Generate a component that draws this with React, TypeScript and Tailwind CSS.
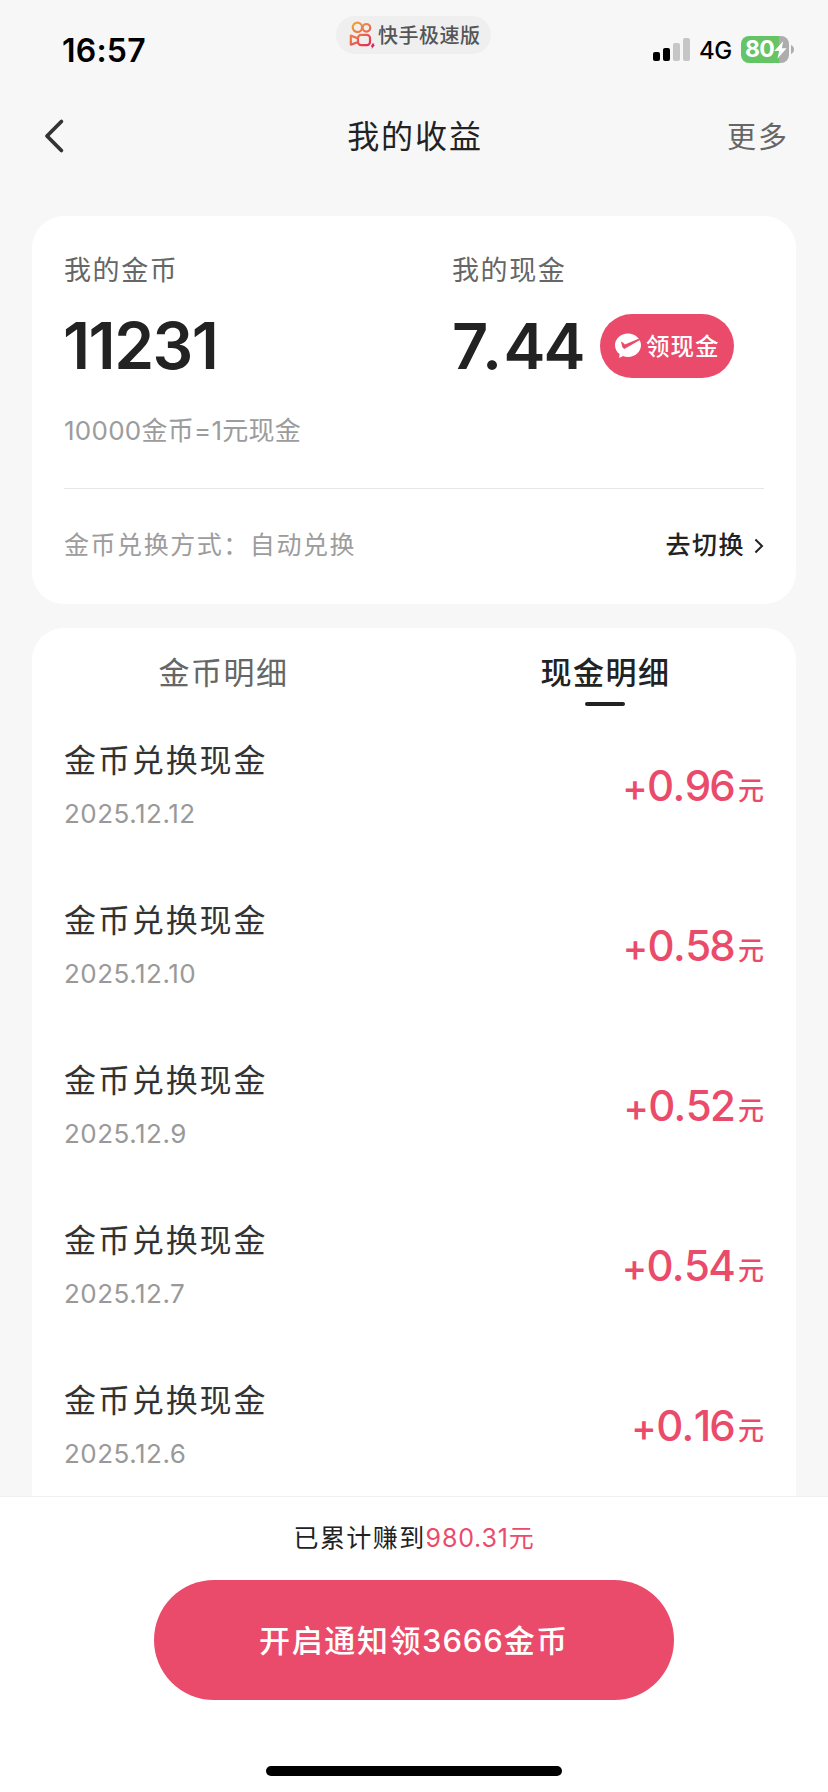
const records = [
  { date: "2025.12.12", whole: "0", cents: "96" },
  { date: "2025.12.10", whole: "0", cents: "58" },
  { date: "2025.12.9", whole: "0", cents: "52" },
  { date: "2025.12.7", whole: "0", cents: "54" },
  { date: "2025.12.6", whole: "0", cents: "16" },
];

function KwaiLogo() {
  return (
    <svg className="h-[28px] w-[26px] shrink-0" viewBox="0 0 26 28" fill="none">
      <defs>
        <linearGradient id="kwai" x1="3" y1="2" x2="20" y2="27" gradientUnits="userSpaceOnUse">
          <stop offset="0" stopColor="#f5a52c" />
          <stop offset="0.5" stopColor="#ee6a4c" />
          <stop offset="1" stopColor="#e0245e" />
        </linearGradient>
      </defs>
      <g stroke="url(#kwai)" strokeWidth="2.2">
        <circle cx="8.4" cy="6.3" r="4.7" />
        <circle cx="17.4" cy="6.8" r="3.8" />
        <rect x="9" y="13.8" width="12" height="10.4" rx="3.2" />
        <path d="M8.6 17.2 1.8 14.6v9l6.8-2.4" strokeLinejoin="round" />
      </g>
      <path d="M23.3 22.4h2l-.5 1.7h1.200L22.600 28l.4-2.300h-1.300z" fill="#e0245e" />
    </svg>
  );
}

function StatusBar() {
  return (
    <div className="flex h-[88px] shrink-0 items-start">
      <div className="w-[336px] pt-[31px] pl-[62px] text-[32px] leading-[40px] font-semibold tracking-[0.2px] text-black">16:57</div>
      <div className="mt-4 flex h-[38px] w-[155px] items-center rounded-full bg-[#efefef] pl-[13px]">
        <KwaiLogo />
        <span className="mt-[1px] ml-[3px] text-[20px] leading-[28px] font-medium tracking-[0.5px] whitespace-nowrap text-[#555]">快手极速版</span>
      </div>
      <div className="ml-auto flex pt-[35px] pr-[34px]">
        <svg className="mt-[3px] h-[23px] w-[37px]" viewBox="0 0 37 23">
          <rect x="0" y="14" width="7" height="9" rx="2" fill="#000" />
          <rect x="10" y="10" width="7" height="13" rx="2" fill="#000" />
          <rect x="20" y="5" width="7" height="18" rx="2" fill="#c6c6c6" />
          <rect x="30" y="0" width="7" height="23" rx="2" fill="#c6c6c6" />
        </svg>
        <span className="ml-[9px] w-[32px] text-[24px] leading-[31px] font-medium tracking-[-0.5px] text-black">4G</span>
        <div className="mt-[1px] ml-[10px] flex h-[27px] w-[48px] items-center overflow-hidden rounded-[8px] bg-linear-to-r from-[#65c466] from-80% to-[#adadad] to-80%">
          <span className="ml-[4px] w-[28px] text-[23px] leading-[27px] font-bold tracking-[-0.8px] text-white">80</span>
          <svg className="ml-[1px] h-[18px] w-[13px]" viewBox="0 0 13 18">
            <path d="M9.200.3.200 10h5L3.400 17.700 12.600 7.300H7.800z" fill="#fff" />
          </svg>
        </div>
        <svg className="mt-[10px] ml-[2px] h-[9px] w-[3px]" viewBox="0 0 3 9">
          <path d="M0 0c1.800.6 3 2.300 3 4.500S1.800 8.400 0 9z" fill="#adadad" />
        </svg>
      </div>
    </div>
  );
}

function NavBar() {
  return (
    <header className="flex h-[96px] shrink-0 items-center justify-between pr-[39px] pl-[43px]">
      <svg className="h-[36px] w-[60px]" viewBox="0 0 60 36" fill="none">
        <path d="M18.4 3.5 4 18 18.4 32.5" stroke="#333" strokeWidth="3.8" strokeLinecap="round" strokeLinejoin="round" />
      </svg>
      <h1 className="mt-[2px] text-[32px] leading-[44px] tracking-[1.9px] text-[#222]">我的收益</h1>
      <span className="mt-[3px] text-[29px] leading-[40px] tracking-[2px] text-[#666]">更多</span>
    </header>
  );
}

function BalanceCard() {
  return (
    <section className="mt-8 flex h-[388px] shrink-0 flex-col rounded-[32px] bg-white px-8">
      <div className="grid grid-cols-[388px_1fr]">
        <div>
          <p className="mt-[35px] text-[27px] leading-[40px] tracking-[1.6px] text-[#666]">我的金币</p>
          <p className="mt-[15px] -ml-[1px] text-[64px] leading-[80px] font-semibold tracking-[-1.5px] text-[#222]">11231</p>
        </div>
        <div>
          <p className="mt-[35px] text-[27px] leading-[40px] tracking-[1.6px] text-[#666]">我的现金</p>
          <div className="mt-[15px] flex items-center">
            <span className="w-[148px] text-[63px] leading-[80px] font-semibold text-[#222]">
              <span className="tracking-[1.5px]">7.</span>
              <span className="tracking-[-2px]">44</span>
            </span>
            <button className="flex h-[64px] w-[134px] items-center rounded-full bg-[#ea4b6a] pl-[15px]">
              <svg className="h-[26px] w-[26px] shrink-0" viewBox="0 0 26 26">
                <path d="M13 .5C20.200.5 26 5.700 26 12.200s-5.800 11.700-13 11.700c-1.800 0-3.500-.3-5-.9L4.200 25l.4-3.900C1.800 19 0 15.800 0 12.200 0 5.700 5.800.5 13 .5z" fill="#fff" />
                <path d="M6 8.8 7.6 9.2 9.9 11.6 24.2 5.6 24.9 7.1 9.3 16 7.4 14.2z" fill="#ea4b6a" />
              </svg>
              <span className="mt-[2px] ml-[5px] text-[23.5px] leading-[34px] font-medium tracking-[1px] whitespace-nowrap text-white">领现金</span>
            </button>
          </div>
        </div>
      </div>
      <p className="mt-[27px] text-[26px] leading-[36px] tracking-[0.25px] text-[#9c9c9c]">10000金币=1元现金</p>
      <div className="mt-[39px] h-px shrink-0 bg-[#e6e6e6]" />
      <div className="flex h-[111px] items-center justify-between">
        <span className="text-[25px] leading-[36px] tracking-[1.55px] text-[#9c9c9c]">金币兑换方式：自动兑换</span>
        <span className="flex items-center text-[25px] leading-[36px] font-medium tracking-[1.5px] text-[#222]">
          去切换
          <svg className="mt-[2px] ml-[7px] h-[16px] w-[12px]" viewBox="0 0 12 16" fill="none">
            <path d="M3.4 1.5 10 8 3.4 14.5" stroke="#222" strokeWidth="2" />
          </svg>
        </span>
      </div>
    </section>
  );
}

function DetailCard() {
  return (
    <section className="mt-6 flex min-h-0 flex-1 flex-col overflow-hidden rounded-t-[32px] bg-white">
      <div className="grid h-[92px] shrink-0 grid-cols-2 text-center text-[31px] leading-[44px] tracking-[1.5px]">
        <div className="pt-[23px] pl-[1px] text-[#666]">金币明细</div>
        <div className="flex flex-col items-center pt-[23px] font-medium text-[#222]">
          <span className="pl-[1px]">现金明细</span>
          <div className="mt-[7px] h-[4px] w-[40px] rounded-[2px] bg-[#222]" />
        </div>
      </div>
      <ul className="px-8">
        {records.map((r) => (
          <li key={r.date} className="flex h-[160px] justify-between">
            <div>
              <p className="mt-[19px] text-[32px] leading-[44px] tracking-[1.9px] text-[#333]">金币兑换现金</p>
              <p className="mt-[13px] text-[26px] leading-[36px] tracking-[0.5px] text-[#999]">{r.date}</p>
            </div>
            <p className="flex items-start pt-[40px] font-medium text-[#ea4b6a]">
              <span className="text-[42px] leading-[52px] tracking-[-1.8px] [font-feature-settings:'calt'_0]">
                <span className="text-[38px] tracking-[-0.6px]">+</span>
                {r.whole}
                <span className="tracking-[-0.5px]">.</span>
                {r.cents}
              </span>
              <span className="ml-[4px] text-[26px] leading-[61px]">元</span>
            </p>
          </li>
        ))}
      </ul>
    </section>
  );
}

function BottomBar() {
  return (
    <footer className="flex h-[296px] shrink-0 flex-col items-center border-t border-[#f0f0f0] bg-white">
      <p className="mt-[23px] text-[25px] leading-[36px] tracking-[1.4px] text-[#222]">
        已累计赚到<span className="tracking-[0.8px] text-[#ea4b6a]">980.31元</span>
      </p>
      <button className="mt-[24px] h-[120px] w-[520px] rounded-full bg-[#ea4b6a] pt-[1px] text-[31px] leading-[44px] font-medium tracking-[1.6px] text-white">
        开启通知领<span className="tracking-[0.9px]">3666</span>金币
      </button>
      <div className="mt-[66px] h-[10px] w-[296px] rounded-full bg-black" />
    </footer>
  );
}

export default function App() {
  return (
    <div className="flex h-[1792px] w-[828px] flex-col overflow-hidden bg-[#f7f7f7] font-[Inter,'Noto_Sans_CJK_SC',sans-serif]">
      <StatusBar />
      <NavBar />
      <main className="flex min-h-0 flex-1 flex-col px-8">
        <BalanceCard />
        <DetailCard />
      </main>
      <BottomBar />
    </div>
  );
}
